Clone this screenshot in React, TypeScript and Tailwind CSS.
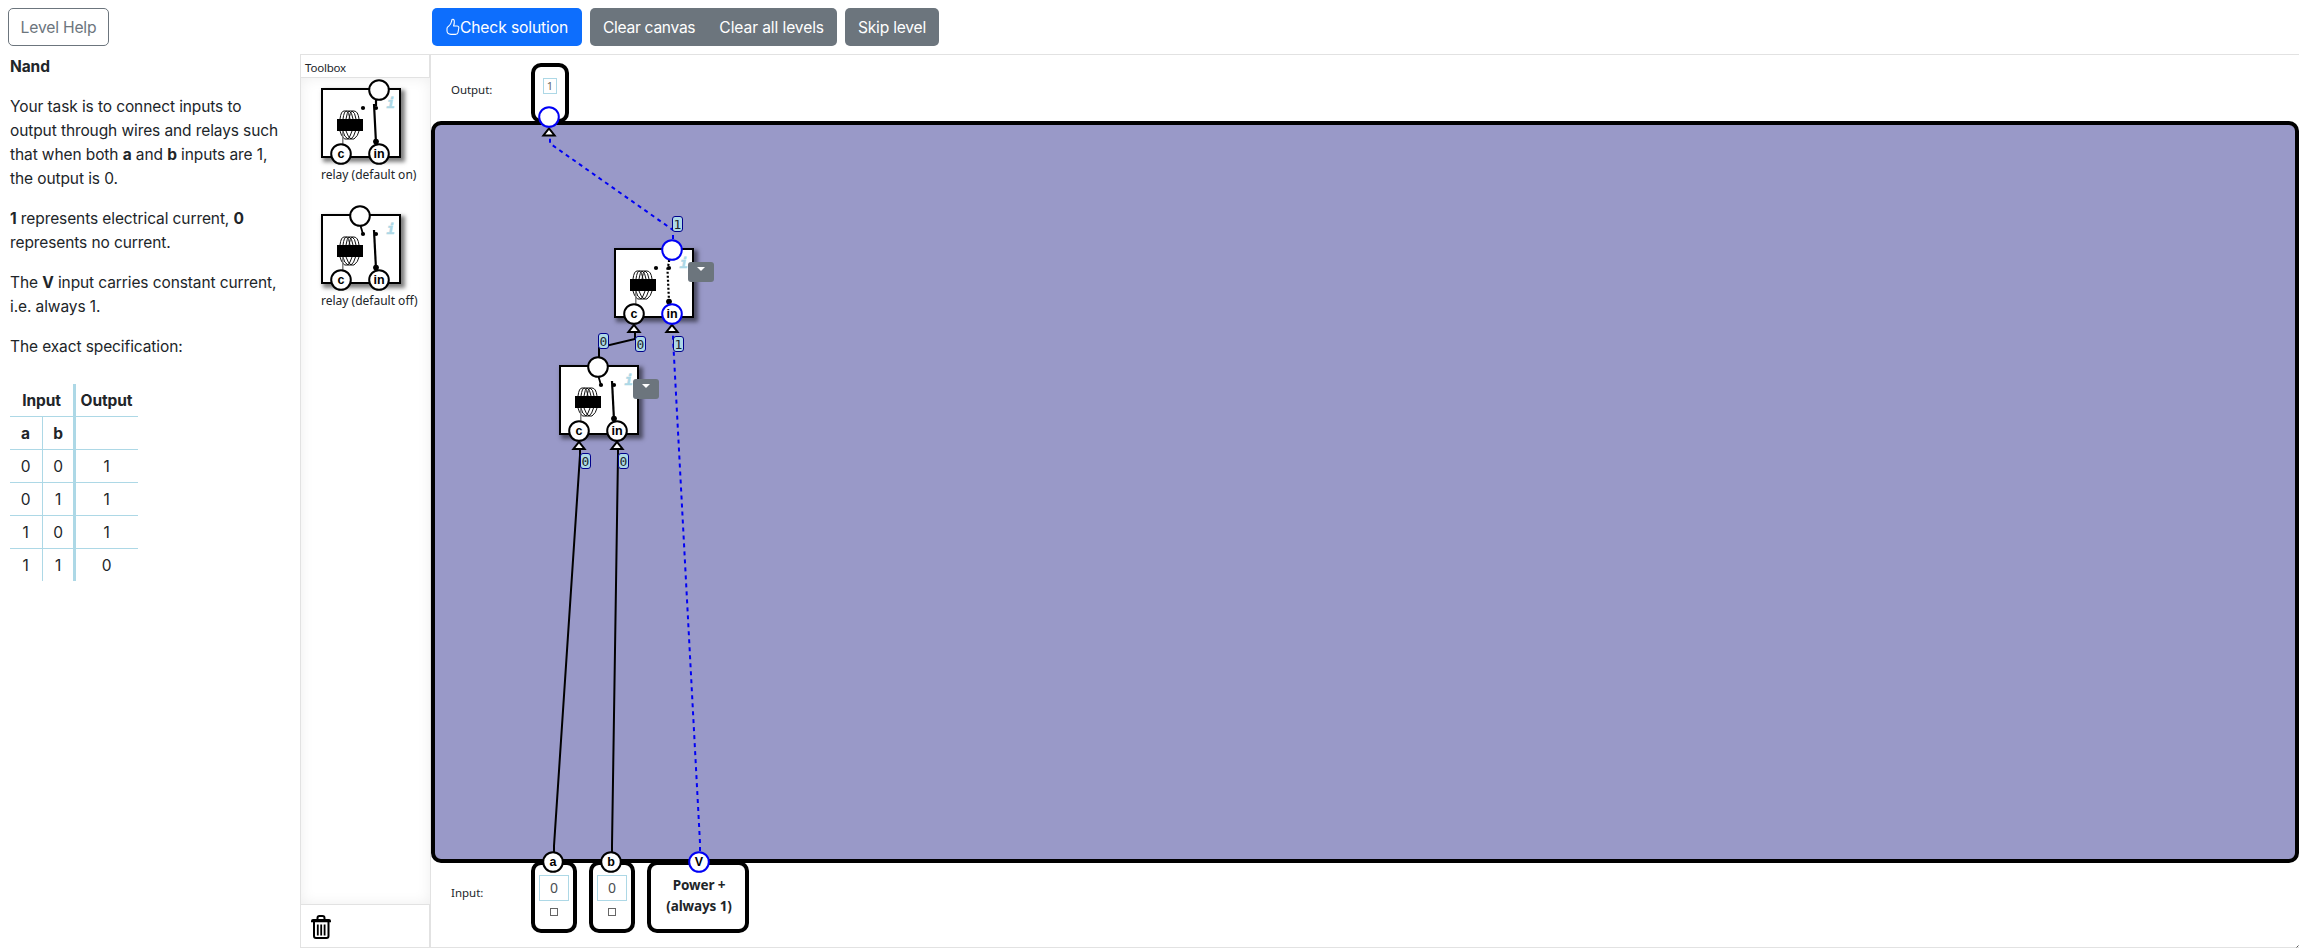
import React from "react";

const SANS = "font-['Inter','Liberation_Sans',sans-serif]";
const HUMANIST = "font-['Noto_Sans','Open_Sans',sans-serif]";

function Port({ x, y, label, live }: { x: number; y: number; label?: string; live?: boolean }) {
  return (
    <g>
      <circle cx={x} cy={y} r={9.8} fill="white" stroke={live ? "#0000f5" : "black"} strokeWidth={2} />
      {label && (
        <text x={x} y={y + 4} textAnchor="middle" fontSize={12.5} fontWeight={700} fill="black" className="font-['Liberation_Sans',sans-serif]">
          {label}
        </text>
      )}
    </g>
  );
}

function Arrow({ x, y }: { x: number; y: number }) {
  return <path d={`M${x} ${y + 1.8} L${x + 5.6} ${y + 9} H${x - 5.6} Z`} fill="white" stroke="black" strokeWidth={2} />;
}

function RelaySketch({ on, live }: { on: boolean; live?: boolean }) {
  const topX = on ? 58 : 39;
  return (
    <svg className="absolute -left-0.5 -top-0.5 overflow-visible" width="80" height="70" viewBox="0 0 80 70">
      <g fill="none" stroke="#111" strokeWidth={1}>
        <path d="M19 31 Q20 23 23 23 H33 Q37 23 38 31" />
        <path d="M22 31 Q23 23 25.5 23 Q28 24 29 31" />
        <path d="M25 31 Q26 24 28 23 Q31 24 32 31" />
        <path d="M28 31 Q29 24 31 23 Q34 24 35 31" />
        <path d="M19 43 Q20 48 23.5 51 H33 Q37 48 38 43" />
        <path d="M22 43 Q23 49 27 51 Q29 49 31 43" />
        <path d="M25 43 Q27 49 30 51 Q33 49 34.5 43" />
      </g>
      <path d="M21.8 43 V56" stroke="#777" strokeWidth={1.4} />
      <rect x={16} y={31} width={26} height={12} fill="black" />
      <circle cx={42} cy={20} r={2.1} />
      <circle cx={55} cy={20} r={2.1} />
      <circle cx={55} cy={53.6} r={2.9} />
      <path
        d={live ? "M55 12 V15 L53.4 20 L55 53" : on ? "M55 12 V18 M53 16 L54.9 53" : "M53 16 L54.9 53"}
        fill="none"
        stroke="black"
        strokeWidth={2.2}
        strokeDasharray={live ? "2 2" : undefined}
      />
      {!on && <path d="M39.6 12 L42 20" stroke="black" strokeWidth={1.8} />}
      <text
        x={65.5}
        y={20}
        fontSize={14}
        fontWeight={700}
        fontStyle="italic"
        fill="#add8e6"
        stroke="#add8e6"
        strokeWidth={0.5}
        className="font-['DejaVu_Sans_Mono',monospace]"
      >
        i
      </text>
      <Port x={topX} y={2} live={live} />
      <Port x={20} y={66} label="c" />
      <Port x={58} y={66} label="in" live={live} />
    </svg>
  );
}

function Relay({ on, live, menu }: { on: boolean; live?: boolean; menu?: boolean }) {
  return (
    <div className="relative h-[70px] w-20 border-2 border-black bg-white shadow-[3px_3px_4px_1px_rgba(0,0,0,0.5)]">
      {menu && (
        <button className="absolute left-[72px] top-3 flex h-5 w-[26px] items-start justify-center rounded-[3px] bg-[#6c757d] pt-[5px]">
          <span className="border-x-4 border-t-4 border-x-transparent border-t-white" />
        </button>
      )}
      <RelaySketch on={on} live={live} />
    </div>
  );
}

function Badge({ value, place }: { value: number; place: string }) {
  return (
    <span
      className={`absolute ${place} flex h-4 w-[11px] items-center justify-center rounded-[3px] border border-[#00008b] bg-[#add8e6] font-['DejaVu_Sans_Mono',monospace] text-[13px] leading-none text-[#212529]`}
    >
      {value}
    </span>
  );
}

function InputBox() {
  return (
    <div className="flex h-[72px] w-[46px] flex-col items-center rounded-[10px] border-4 border-black bg-white pt-2.5">
      <span className={`flex h-[26px] w-[30px] items-center justify-center border border-[#add8e6] pb-0.5 text-[14px] text-[#4b4f53] ${HUMANIST}`}>
        0
      </span>
      <span className="mt-[7px] size-2 border border-[#666] bg-white" />
    </div>
  );
}

const rows = [
  ["0", "0", "1"],
  ["0", "1", "1"],
  ["1", "0", "1"],
  ["1", "1", "0"],
];

function Row({ cells, last, bold }: { cells: string[]; last?: boolean; bold?: boolean }) {
  return (
    <div
      className={`grid grid-cols-[33px_33px_62px] grid-rows-[32px] text-center leading-[34px] ${last ? "h-8" : "h-[33px] border-b border-[#add8e6]"} ${bold ? "font-bold" : ""}`}
    >
      <div className="h-8 border-r border-[#add8e6] pr-px">{cells[0]}</div>
      <div className="h-8 border-r-[3px] border-[#add8e6]">{cells[1]}</div>
      <div className="h-8 pr-px">{cells[2]}</div>
    </div>
  );
}

export default function App() {
  return (
    <div className={`flex h-[948px] w-[2299px] flex-col overflow-hidden bg-white text-[16px] text-[#212529] ${SANS}`}>
      <header className="flex h-[54px] shrink-0 items-start pt-2 pl-2">
        <button className="h-[38px] w-[101px] rounded-[5px] border border-[#6c757d] pt-px text-[15.7px] tracking-[-0.2px] text-[#6c757d]">Level Help</button>
        <div className="ml-[323px] flex text-white">
          <button className="flex h-[38px] w-[150px] items-center justify-center rounded-[5px] bg-[#0d6efd]">
            <svg width="14" height="18" viewBox="0 0 14 18" fill="none" stroke="white" strokeWidth="1.1" strokeLinejoin="round">
              <path d="M6 1.6 Q8 .6 8.3 3 Q8.5 5.5 7.6 8 H11 Q13 8 12.8 10 L12 14.5 Q11.6 16.4 9.5 16.4 H5 Q1.2 16 1 13 V10.5 Q1 9 2.6 8.2 Q5 6.5 5.5 3.5 Z" />
            </svg>
            <span className="pt-px text-[15.7px] tracking-[-0.15px]">Check solution</span>
          </button>
          <div className="ml-2 flex h-[38px] w-[247px] items-center justify-between rounded-[5px] bg-[#6c757d] pt-px pr-[13px] pl-[13px] text-[15.6px]">
            <button className="tracking-[-0.3px]">Clear canvas</button>
            <button className="tracking-[-0.1px]">Clear all levels</button>
          </div>
          <button className="ml-2 h-[38px] w-[94px] rounded-[5px] bg-[#6c757d] pt-px text-[15.6px] tracking-[-0.2px]">Skip level</button>
        </div>
      </header>

      <div className="flex min-h-0 flex-1">
        <aside className="flex w-[300px] shrink-0 flex-col gap-4 pt-px pl-2.5 leading-6 tracking-[-0.1px] whitespace-nowrap text-[15.5px]">
          <p className="font-bold">Nand</p>
          <p>
            Your task is to connect inputs to
            <br />
            output through wires and relays such
            <br />
            that when both <b>a</b> and <b>b</b> inputs are 1,
            <br />
            the output is 0.
          </p>
          <p>
            <b>1</b> represents electrical current, <b>0</b>
            <br />
            represents no current.
          </p>
          <p>
            The <b>V</b> input carries constant current,
            <br />
            i.e. always 1.
          </p>
          <p>The exact specification:</p>
          <div className="mt-[9px] w-32">
            <div className="grid h-[33px] grid-cols-[66px_62px] grid-rows-[32px] border-b border-[#add8e6] text-center leading-[34px] font-bold">
              <div className="h-8 border-r-[3px] border-[#add8e6]">Input</div>
              <div className="h-8 pr-px">Output</div>
            </div>
            <Row cells={["a", "b", ""]} bold />
            {rows.map((r, i) => (
              <Row key={i} cells={r} last={i === 3} />
            ))}
          </div>
        </aside>

        <section className={`flex w-[131px] shrink-0 flex-col border-r border-b border-[#e2e2e2] ${HUMANIST}`}>
          <div className="h-6 border border-[#e2e2e2] pl-1 text-[11.5px] leading-[25px] tracking-[-0.2px]">Toolbox</div>
          <div className="flex flex-1 flex-col border-l border-[#e2e2e2] pl-5 text-[12px] leading-4 whitespace-nowrap shadow-[inset_0_0_14px_rgba(0,0,0,0.07)]">
            <div className="mt-2.5">
              <Relay on />
              <div className="mt-[9px]">relay (default on)</div>
            </div>
            <div className="mt-[31px]">
              <Relay on={false} />
              <div className="mt-[9px]">relay (default off)</div>
            </div>
          </div>
          <div className="h-[43px] border-x border-t border-[#e2e2e2] pt-2.5 pl-2.5">
            <svg width="20" height="24" viewBox="0 0 20 24" fill="none" stroke="black">
              <path d="M6.5 4.5 V3 Q6.5 1 8.5 1 H11.5 Q13.5 1 13.5 3 V4.5" strokeWidth="2" />
              <path d="M0 7.3 V6 Q0 4 2 4 H18 Q20 4 20 6 V7.3 Z" fill="black" stroke="none" />
              <path d="M3 7 V21 Q3 23 5 23 H15.5 Q17.5 23 17.5 21 V7" strokeWidth="2" />
              <path d="M6.8 9.5 V20.5 M10.2 9.5 V20.5 M13.6 9.5 V20.5" strokeWidth="1.8" />
            </svg>
          </div>
        </section>

        <main className="relative flex min-w-0 flex-1 flex-col border-t border-b border-[#e2e2e2]">
          <div className="flex h-[66px] items-start pl-5 pt-2">
            <div className={`w-20 pt-[19px] text-[11.5px] leading-4 tracking-[-0.05px] ${HUMANIST}`}>Output:</div>
            <div className="flex h-[60px] w-[38px] justify-center rounded-[10px] border-4 border-black pt-[11px]">
              <span className={`flex h-4 w-3.5 items-center justify-center border border-[#add8e6] text-[11px] text-[#666] ${HUMANIST}`}>1</span>
            </div>
          </div>
          <div className="h-[742px] shrink-0 rounded-[10px] border-4 border-black bg-[#9999c8]" />
          <div className="-mt-0.5 flex items-start gap-3 pl-5">
            <div className={`mr-[-12px] w-20 pt-6 text-[11.5px] leading-4 ${HUMANIST}`}>Input:</div>
            <InputBox />
            <InputBox />
            <div className={`h-[72px] w-[102px] rounded-[10px] border-4 border-black bg-white pt-2.5 pl-0.5 text-center text-[13.5px] leading-[21px] font-bold tracking-[-0.1px] ${HUMANIST}`}>
              Power +<br />
              (always 1)
            </div>
          </div>

          <svg className="absolute left-0 -top-px" width="1868" height="894" viewBox="431 54 1868 894">
            <g fill="none" strokeWidth={2} stroke="black">
              <path d="M554 852 V846 L580 455 V448" />
              <path d="M612 852 V846 L618 455 V448" />
              <path d="M599 358 V347.5 L635 339 V331" />
            </g>
            <g fill="none" strokeWidth={2} stroke="#0000f5" strokeDasharray="4 4">
              <path d="M700 851 V843 L673 338 V331" />
              <path d="M673 239 V230 L550 143.5 V136" />
            </g>
            <Arrow x={549} y={126.5} />
            <Arrow x={634} y={323} />
            <Arrow x={672} y={323} />
            <Arrow x={579} y={440} />
            <Arrow x={617} y={440} />
            <Port x={549} y={117} live />
            <Port x={553} y={862} label="a" />
            <Port x={611} y={862} label="b" />
            <Port x={699} y={862} label="V" live />
            <path d="M2296.5 947.5 l2-2" stroke="#555" strokeWidth={1} />
          </svg>
          <div className="absolute left-[183px] top-[193px]">
            <Relay on live menu />
          </div>
          <div className="absolute left-32 top-[310px]">
            <Relay on={false} menu />
          </div>
          <Badge value={1} place="left-[241px] top-[161px]" />
          <Badge value={0} place="left-[167px] top-[278px]" />
          <Badge value={0} place="left-[204px] top-[281px]" />
          <Badge value={1} place="left-[242px] top-[281px]" />
          <Badge value={0} place="left-[149px] top-[398px]" />
          <Badge value={0} place="left-[187px] top-[398px]" />
        </main>
      </div>
    </div>
  );
}
